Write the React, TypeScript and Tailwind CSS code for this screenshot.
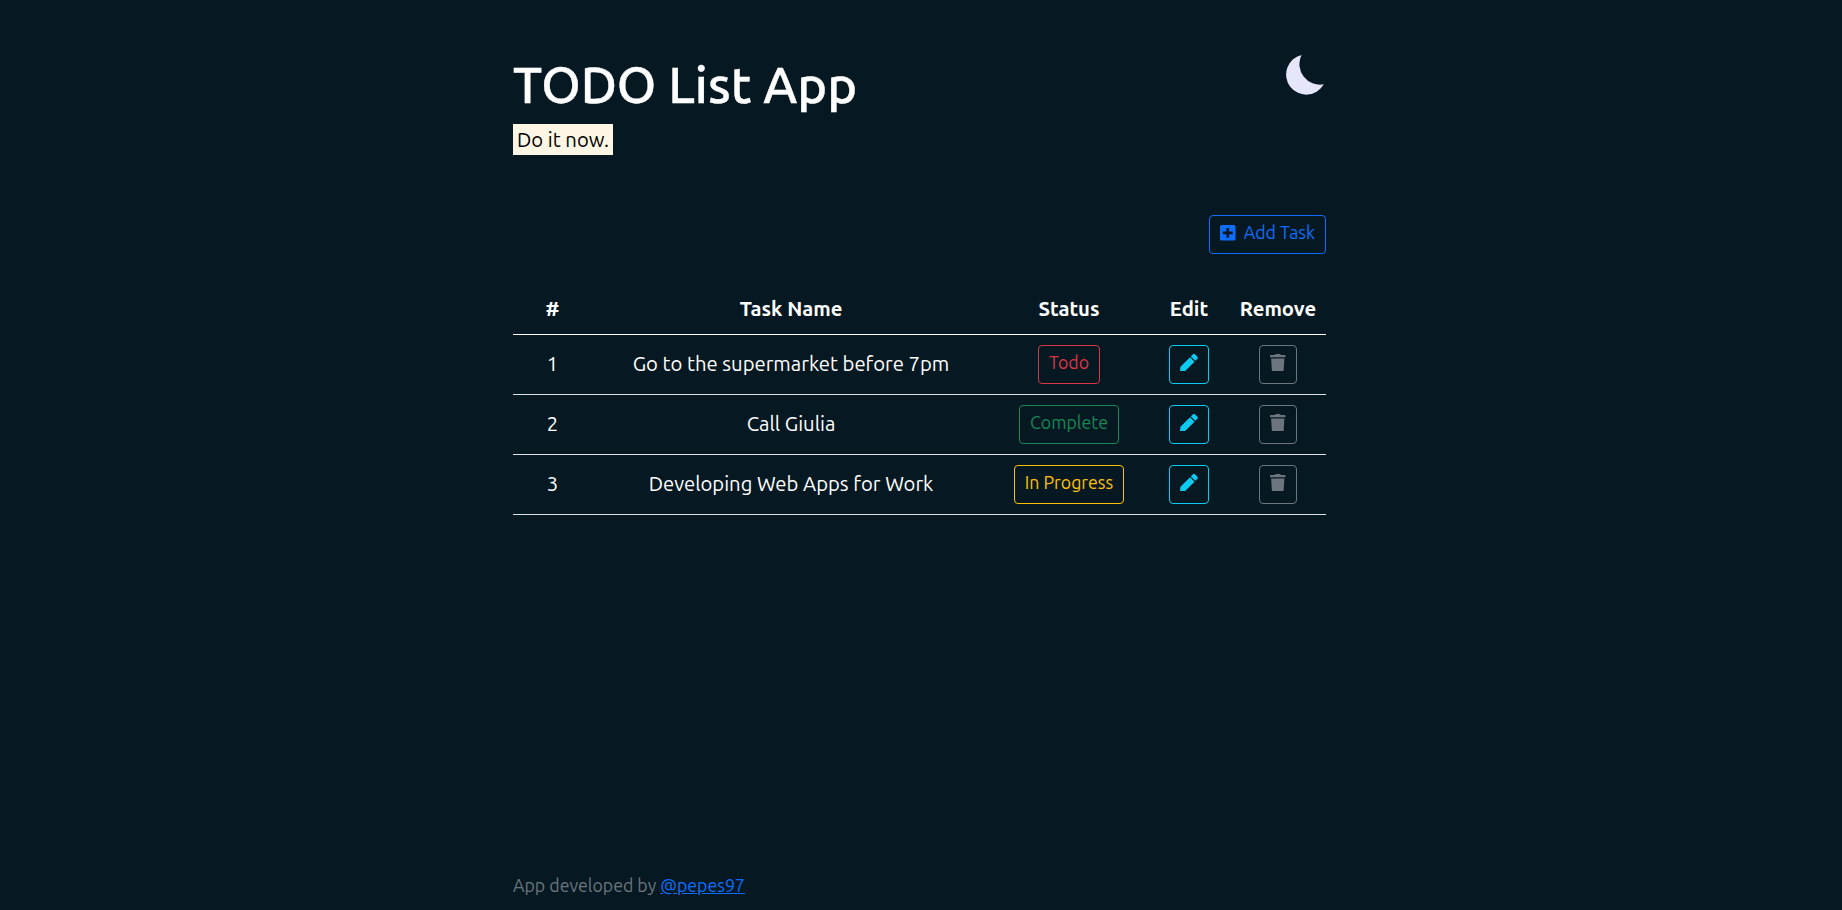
import type { ReactNode } from "react";
import { FaPen, FaPlusSquare, FaTrash } from "react-icons/fa";

type Task = { id: number; name: string; status: string; tone: string };

const tasks: Task[] = [
  { id: 1, name: "Go to the supermarket before 7pm", status: "Todo", tone: "border-[#dc3545] text-[#dc3545]" },
  { id: 2, name: "Call Giulia", status: "Complete", tone: "border-[#198754] text-[#198754]" },
  { id: 3, name: "Developing Web Apps for Work", status: "In Progress", tone: "border-[#ffc107] text-[#ffc107]" },
];

const columns = "grid grid-cols-[79px_398px_158px_82px_96px] justify-items-center border-b";

function Button({ tone, children }: { tone: string; children: ReactNode }) {
  return (
    <button
      type="button"
      className={`flex h-[39px] items-center gap-2 rounded-[4px] border px-[10.1px] pb-[4px] text-[17.72px] whitespace-nowrap ${tone}`}
    >
      {children}
    </button>
  );
}

function Moon() {
  return (
    <svg width="38" height="40" viewBox="0 0 38 40" fill="#e6e6fa" aria-label="Dark theme">
      <path d="M15.5 0A20.6 20.6 0 0 0 37.8 29.3A20.1 20.1 0 1 1 15.5 0Z" />
    </svg>
  );
}

export default function App() {
  return (
    <div className="flex h-[910px] justify-center bg-[#061922] pr-[3px] font-[Ubuntu,sans-serif] text-[20.25px] text-white">
      <div className="flex w-[813px] flex-col">
        <header className="flex items-start justify-between pt-[54px]">
          <div>
            <h1 className="h-[60px] text-[50.6px] leading-[62px] font-medium [-webkit-text-stroke:0.4px_currentColor]">
              TODO List App
            </h1>
            <p className="mt-[10px] h-[31px] w-fit bg-[#fef6e4] px-[4.05px] leading-[31px] text-black">Do it now.</p>
          </div>
          <div className="pt-px pr-[2px]">
            <Moon />
          </div>
        </header>

        <div className="mt-[60px] flex justify-end">
          <Button tone="border-[#0d6efd] text-[#0d6efd]">
            <FaPlusSquare className="w-[15.5px]" />
            Add Task
          </Button>
        </div>

        <div className="mt-[30px]">
          <div className={`${columns} h-[51px] border-white leading-[49px] font-bold`}>
            <span>#</span>
            <span>Task Name</span>
            <span>Status</span>
            <span>Edit</span>
            <span>Remove</span>
          </div>
          {tasks.map((task) => (
            <div key={task.id} className={`${columns} h-[60px] items-center border-[#dee2e6]`}>
              <span className="pb-px">{task.id}</span>
              <span className="pb-px">{task.name}</span>
              <Button tone={task.tone}>{task.status}</Button>
              <Button tone="border-[#0dcaf0] text-[#0dcaf0]">
                <FaPen />
              </Button>
              <Button tone="border-[#6c757d] text-[#6c757d]">
                <FaTrash className="w-[15.5px]" />
              </Button>
            </div>
          ))}
        </div>

        <footer className="mt-auto pb-[11px] text-[17.72px] leading-[27px] text-[#6c757d]">
          App developed by{" "}
          <a href="#" className="text-[#0d6efd] underline">
            @pepes97
          </a>
        </footer>
      </div>
    </div>
  );
}
